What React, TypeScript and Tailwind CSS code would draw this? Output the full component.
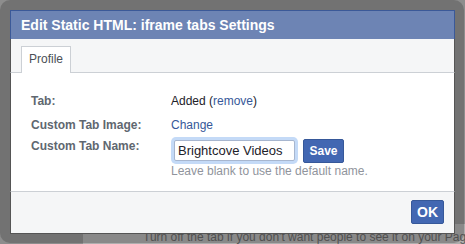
export default function App() {
  return (
    <div className="relative w-[465px] h-[244px] overflow-hidden bg-[#8d8d8d] font-['Liberation_Sans',Arial,sans-serif]">
      {/* page underneath the overlay */}
      <div className="absolute left-[83px] top-[224px] right-0 bottom-0 bg-[#aeaeae] pl-[60px] pt-[6px]">
        <p className="text-[12px] leading-[14px] text-[#5a5a5a] whitespace-nowrap">
          Turn off the tab if you don't want people to see it on your Page.
        </p>
      </div>

      {/* dialog frame */}
      <div className="absolute left-0 top-0 w-[464px] h-[243px] rounded-[10px] bg-[rgba(60,60,60,0.32)] p-[10px]">
        <div className="w-[445px] h-[224px] flex flex-col bg-white">
          <div className="h-[29px] flex items-center pl-[10px] bg-[#6d84b4] border border-b-0 border-[#3b5998]">
            <h1 className="text-[14px] font-bold text-white leading-[17px] pt-[1px]">
              Edit Static HTML: iframe tabs Settings
            </h1>
          </div>

          <div className="h-[34px] flex pt-[7px] pl-[10px] bg-[#f5f6f7] border-x border-x-[#555] border-b border-b-[#ccd0d5]">
            <div className="h-[27px] px-[7px] pt-[4px] bg-white border border-b-0 border-[#ccd0d5] text-[12px] leading-[16px] text-[#4b4f56]">
              Profile
            </div>
          </div>

          <div className="h-[118px] flex flex-col pt-[20px] pl-[20px] border-x border-[#555] text-[12px] leading-[16px]">
            <div className="flex">
              <span className="w-[140px] font-bold text-[#606770]">Tab:</span>
              <span className="text-[#1d2129]">
                Added (<a className="text-[#365899]">remove</a>)
              </span>
            </div>
            <div className="flex mt-[8px]">
              <span className="w-[140px] font-bold text-[#606770]">Custom Tab Image:</span>
              <a className="text-[#365899]">Change</a>
            </div>
            <div className="flex items-start mt-[4px] h-[26px]">
              <span className="w-[140px] mt-[1px] font-bold text-[#606770]">Custom Tab Name:</span>
              <input
                defaultValue="Brightcove Videos"
                className="ml-[3px] mt-[3px] w-[121px] h-[21px] px-[3px] rounded-[2px] border border-[#a7b6cf] ring-[3px] ring-[#c4daf7] outline-none text-[13px] text-[#1d2129] bg-white"
              />
              <button className="ml-[8px] mt-[2px] w-[41px] h-[24px] rounded-[2px] bg-[#4267b2] border border-[#365899] text-white font-bold text-[12px]">
                Save
              </button>
            </div>
            <p className="ml-[140px] text-[#90949c]">Leave blank to use the default name.</p>
          </div>

          <div className="flex-1 flex justify-end pt-[8px] pr-[10px] bg-[#f5f6f7] border border-t-[#ccd0d5] border-x-[#555] border-b-[#555]">
            <button className="w-[33px] h-[24px] rounded-[2px] bg-[#4267b2] border border-[#365899] text-white font-bold text-[14px]">
              OK
            </button>
          </div>
        </div>
      </div>
    </div>
  )
}
